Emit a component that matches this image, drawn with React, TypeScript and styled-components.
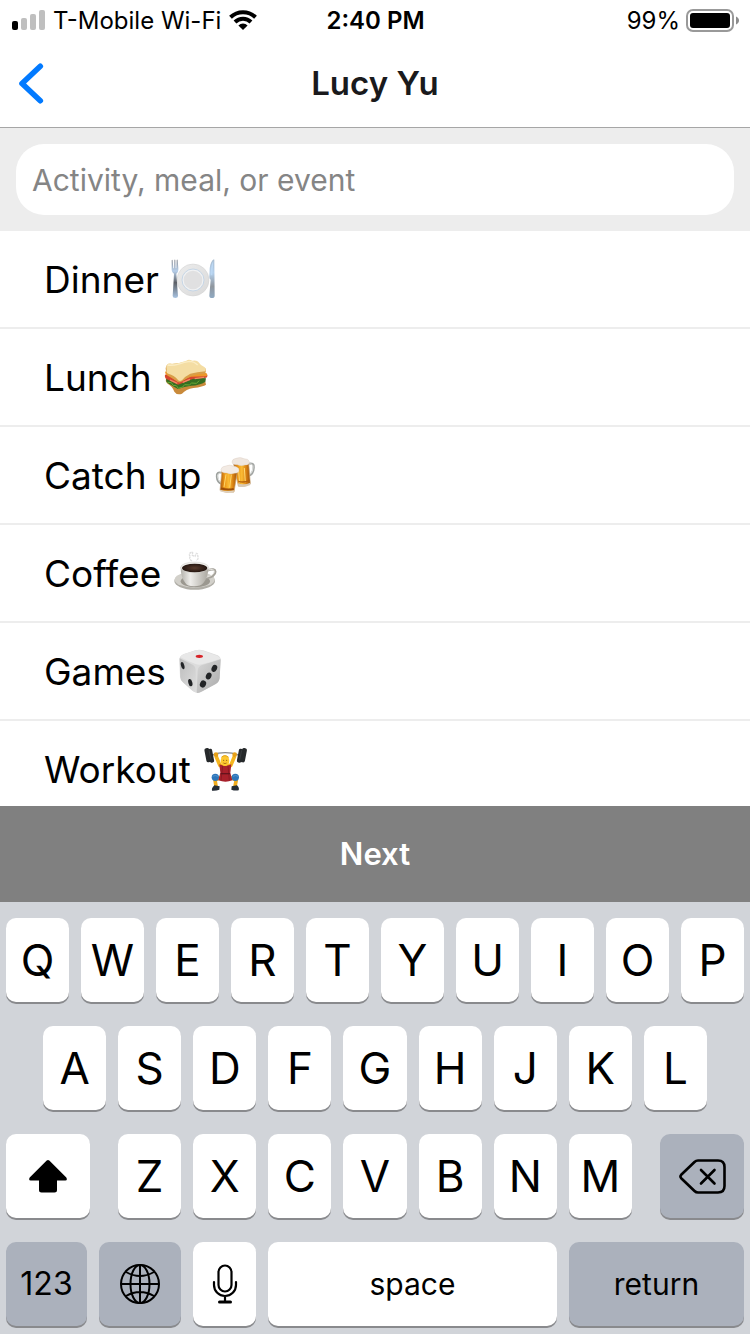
import React from "react";
import styled, { createGlobalStyle } from "styled-components";

const GlobalStyle = createGlobalStyle`
  *, *::before, *::after { box-sizing: border-box; }
  body { margin: 0; background: #fff; }
  body, button, input { font-family: Inter, "Liberation Sans", sans-serif; color: #000; }
  button { border: 0; padding: 0; margin: 0; background: none; cursor: pointer; }
  svg { display: block; flex: none; }
`;

const Screen = styled.div`
  display: flex;
  flex-direction: column;
  height: 100vh;
  overflow: hidden;
  background: #fff;
`;

const StatusBar = styled.div`
  display: grid;
  grid-template-columns: 1fr auto 1fr;
  align-items: center;
  flex: none;
  height: 40px;
  padding: 0 11px 0 12px;
  font-size: 24px;
  line-height: 32px;
`;

const StatusGroup = styled.div<{ $end?: boolean }>`
  display: flex;
  align-items: center;
  justify-content: ${(p) => (p.$end ? "flex-end" : "flex-start")};
  gap: ${(p) => (p.$end ? 6 : 8)}px;
  white-space: nowrap;
`;

const StatusText = styled.span<{ $strong?: boolean }>`
  padding-top: 2px;
  font-weight: ${(p) => (p.$strong ? 600 : 400)};
`;

const NavBar = styled.header`
  display: grid;
  grid-template-columns: 64px 1fr 64px;
  align-items: center;
  flex: none;
  height: 88px;
  border-bottom: 1px solid #a6a6a6;
`;

const BackButton = styled.button`
  display: flex;
  align-items: center;
  height: 100%;
  padding-left: 18px;
`;

const Title = styled.h1`
  margin: 0;
  padding-bottom: 2px;
  text-align: center;
  font-size: 33px;
  line-height: 40px;
  font-weight: 600;
  color: #1a1a1c;
`;

const SearchArea = styled.div`
  flex: none;
  padding: 16px;
  background: #ededed;
`;

const SearchInput = styled.input`
  display: block;
  width: 100%;
  height: 71px;
  padding: 0 16px;
  border: 0;
  outline: 0;
  border-radius: 28px;
  background: #fff;
  font-size: 30px;
  &::placeholder { color: #858585; opacity: 1; }
`;

const List = styled.ul`
  flex: 1;
  min-height: 0;
  margin: 0;
  padding: 0;
  overflow: hidden;
  list-style: none;
`;

const Suggestion = styled.button`
  display: flex;
  align-items: center;
  gap: 12px;
  width: 100%;
  height: 98px;
  padding-left: 44px;
  border-bottom: 2px solid #ededed;
  font-size: 37px;
  line-height: 48px;
`;

const SuggestionLabel = styled.span`
  padding-top: 2px;
`;

const NextButton = styled.button`
  flex: none;
  height: 96px;
  background: #808080;
  color: #fff;
  font-size: 31px;
  line-height: 40px;
  font-weight: 600;
`;

const Keyboard = styled.div`
  display: flex;
  flex-direction: column;
  flex: none;
  gap: 24px;
  padding: 16px 6px 8px;
  background: #d1d4d9;
`;

const KeyRow = styled.div<{ $inset?: number }>`
  display: flex;
  flex: 1;
  gap: 12px;
  padding: 0 ${(p) => p.$inset ?? 0}px;
`;

const Key = styled.button<{ $grow?: number; $dark?: boolean; $size?: number }>`
  display: flex;
  align-items: center;
  justify-content: center;
  flex: ${(p) => p.$grow ?? 63} 1 0;
  min-width: 0;
  height: 84px;
  border-radius: 10px;
  background: ${(p) => (p.$dark ? "#abb1bc" : "#fff")};
  box-shadow: 0 2px 0 #898a8d;
  font-size: ${(p) => p.$size ?? 44}px;
  line-height: 48px;
`;

const EmojiSvg = ({ box, children }: { box: string; children: React.ReactNode }) => (
  <svg width="45" height="45" viewBox={box} aria-hidden="true">{children}</svg>
);

const Dinner = () => (
  <EmojiSvg box="60 51 135 135">
    <defs>
      <linearGradient id="steel" x1="0" y1="0" x2="0" y2="1">
        <stop offset="0" stopColor="#8d9097" /><stop offset=".3" stopColor="#b7cfea" />
        <stop offset=".6" stopColor="#5d6066" /><stop offset="1" stopColor="#a9c4e2" />
      </linearGradient>
      <linearGradient id="blade" x1="0" y1="0" x2="0" y2="1">
        <stop offset="0" stopColor="#a9bccf" /><stop offset=".35" stopColor="#b4d0ec" />
        <stop offset=".7" stopColor="#8f969e" /><stop offset="1" stopColor="#8fa9c2" />
      </linearGradient>
      <linearGradient id="plate" x1="0" y1="0" x2="1" y2="1">
        <stop offset="0" stopColor="#ececec" /><stop offset="1" stopColor="#dadada" />
      </linearGradient>
    </defs>
    <circle cx="126" cy="120" r="48" fill="url(#plate)" stroke="#cfcfcf" strokeWidth="1.5" />
    <circle cx="126" cy="120" r="33" fill="#f1f2f3" stroke="#c6d6e6" strokeWidth="3" />
    <circle cx="126" cy="120" r="28" fill="#e0e0e1" />
    <path d="M62 61q2-3 3 0l2 24h2l1-25q2-3 3 0l1 25h2l1-25q2-3 3 0l2 24q1 13-6 17l5 67q0 6-8 6t-8-6l4-67q-8-4-7-17z" fill="url(#steel)" />
    <path d="M189 58q-10 4-13 27l-1 26q0 6 4 8l-4 48q0 7 8 7t8-7l-1-106q0-3-1-3z" fill="url(#blade)" />
    <path d="M187 63q-7 8-8 43h5z" fill="#bcd8f4" />
  </EmojiSvg>
);

const Sandwich = () => (
  <EmojiSvg box="42 345 135 135">
    <path d="M48 416q-3 9 3 14 16 9 22 25 8 12 23 6 12-13 34-17 30-4 38-10l-4-18z" fill="#c98a3a" />
    <path d="M48 418q0 9 6 12 20 12 30 17 18-7 40-10 25-1 42-12l2-10-60-5z" fill="#356f22" />
    <path d="M52 427l12 1 5 8 10 1 6 8 13-4 6-7 14 1 7-6 14 1 9-8" fill="none" stroke="#6aa834" strokeWidth="3" />
    <path d="M45 404q-2 10 6 14l33 16 22-8 22-9 41-4q5-5 3-9l-80-12z" fill="#d4472e" />
    <path d="M60 420l22 10m16-3 22-9m14-2 28-4" stroke="#f08b66" strokeWidth="4" fill="none" />
    <path d="M45 395q0 8 8 12l32 18 38-15 46-1q5-3 1-9l-80-20z" fill="#ee982a" />
    <path d="M51 374q-6 8-3 20 4 12 13 16l17 12q7 8 15 4 13-7 28-17 20-7 43-8 6-4 2-16l-60-18z" fill="#d89e48" />
    <path d="M51 374q6-6 15-3 23-1 43-9 7-5 18 0 14-3 19 5 5 9 17 14 6 4 3 13-25 2-45 7-15 7-25 20-9 5-14-3-9-12-27-17-7-3-5-12-3-8 1-15z" fill="#f4dda3" />
    <path d="M53 375q15 2 30-2 22-7 35-9 14 0 25 11" stroke="#fbedc5" strokeWidth="4" fill="none" />
  </EmojiSvg>
);

const Beers = () => (
  <EmojiSvg box="192 39 135 135">
    <defs>
      <linearGradient id="beer" x1="0" x2="1" y1="0" y2="0">
        <stop offset="0" stopColor="#a9560b" /><stop offset=".25" stopColor="#ea9516" />
        <stop offset=".5" stopColor="#fbbc35" /><stop offset=".75" stopColor="#da8212" /><stop offset="1" stopColor="#9a4f0a" />
      </linearGradient>
    </defs>
    <path d="M294 72q19-5 17 10-1 20-15 25" fill="none" stroke="#a2a5a3" strokeWidth="7" />
    <path d="M294 73q16-4 15 9-1 18-13 23" fill="none" stroke="#e4e6e3" strokeWidth="3" />
    <path d="M250 68l46 1 5 62q-15 11-36 7z" fill="url(#beer)" stroke="#c9a474" strokeWidth="2" />
    <path d="M265 85l4 43m14-44 3 43" stroke="#ffd873" strokeWidth="3" />
    <path d="M265 124q17 5 34-3" stroke="#b4600d" strokeWidth="4" fill="none" />
    <path d="M264 130q18 6 37-2v7q-18 9-36 5z" fill="#d8c9b4" />
    <path d="M246 66q0-9 12-11 13-5 24 1 14 0 16 9 1 10-13 10-12 5-23-1-15 2-16-8z" fill="#efe6de" stroke="#d4c5ba" strokeWidth="1" />
    <path d="M216 99q-17-5-15 11 1 17 14 21" fill="none" stroke="#9da19e" strokeWidth="7" />
    <path d="M216 100q-14-3-13 10 1 14 11 19" fill="none" stroke="#e4e6e3" strokeWidth="3" />
    <path d="M216 90l46 4-10 62q-22 5-42-5z" fill="url(#beer)" stroke="#c9a474" strokeWidth="2" />
    <path d="M228 103l-6 38m22-37-5 39" stroke="#ffd568" strokeWidth="3" />
    <path d="M213 145q19 6 38 2" stroke="#9c4d09" strokeWidth="6" fill="none" />
    <path d="M210 149q20 7 42 2l-1 7q-22 3-41-4z" fill="#dfd1be" />
    <path d="M213 88q2-9 14-10 13-6 24 1 15 1 16 12 0 9-14 9-11 5-22-1-19 1-18-11z" fill="#f3ebe4" stroke="#d4c5ba" strokeWidth="1" />
  </EmojiSvg>
);

const Coffee = () => (
  <EmojiSvg box="69 333 135 135">
    <defs>
      <linearGradient id="cup" x1="0" x2="1">
        <stop offset="0" stopColor="#b3b1ab" /><stop offset=".35" stopColor="#eeedea" /><stop offset="1" stopColor="#aaa79f" />
      </linearGradient>
      <radialGradient id="brew">
        <stop offset="0" stopColor="#573a2c" /><stop offset="1" stopColor="#241610" />
      </radialGradient>
    </defs>
    <ellipse cx="134" cy="423" rx="61" ry="26" fill="#b0aea7" />
    <ellipse cx="134" cy="419" rx="60" ry="24" fill="#d2d0ca" />
    <ellipse cx="136" cy="424" rx="44" ry="18" fill="#9b9890" />
    <path d="M173 391q22-7 23 4 0 14-29 20" fill="none" stroke="#a5a29a" strokeWidth="7" />
    <path d="M174 390q19-5 19 5-1 12-25 17" fill="none" stroke="#e4e2dd" strokeWidth="3" />
    <path d="M92 382q0 30 14 47 6 10 26 10t28-10q15-16 15-47z" fill="url(#cup)" />
    <ellipse cx="134" cy="382" rx="42" ry="16" fill="#efeeeb" stroke="#bfbcb5" strokeWidth="1" />
    <ellipse cx="134" cy="384" rx="38" ry="13" fill="url(#brew)" />
    <path d="M126 363q-12-8-4-13-8-7 0-12 4-4 6 0l-1 8 8 3 4-9q6 1 4 8 5 9-5 13" fill="none" stroke="#dedede" strokeWidth="4" strokeDasharray="7 2" />
  </EmojiSvg>
);

const Die = () => (
  <EmojiSvg box="87 42 135 135">
    <defs>
      <linearGradient id="leftFace" x1="0" y1="0" x2="1" y2="1">
        <stop offset="0" stopColor="#bdbdbd" /><stop offset="1" stopColor="#dedede" />
      </linearGradient>
      <linearGradient id="rightFace" x1="0" y1="0" x2="1" y2="1">
        <stop offset="0" stopColor="#d8d8d8" /><stop offset="1" stopColor="#aaaaaa" />
      </linearGradient>
    </defs>
    <path d="M91 73q1-9 12-15l36-12q12-3 23 0l44 15q10 5 9 16l-4 55q-2 10-12 16l-42 22q-12 6-22 0l-32-27q-9-7-10-17z" fill="#dcdcdc" />
    <path d="M92 70l39 19q9 5 9 17l2 66q-5 0-12-5l-28-25q-8-7-8-16z" fill="url(#leftFace)" />
    <path d="M215 73l-3 57q-2 12-12 17l-40 22q-12 7-17 4l3-66q1-11 11-16z" fill="url(#rightFace)" />
    <path d="M93 66q4-5 12-9l37-11q10-2 20 1l42 15q8 3 10 9-25 9-55 17-10 3-19-1-25-9-47-21z" fill="#e8e8e8" />
    <ellipse cx="151" cy="64" rx="11" ry="5" fill="#d72328" />
    <g fill="#222426">
      <ellipse cx="101" cy="92" rx="5" ry="11" transform="rotate(-15 101 92)" />
      <ellipse cx="124" cy="143" rx="6" ry="11" transform="rotate(-15 124 143)" />
      <ellipse cx="196" cy="100" rx="8" ry="11" transform="rotate(25 196 100)" />
      <ellipse cx="179" cy="123" rx="8" ry="11" transform="rotate(25 179 123)" />
      <ellipse cx="162" cy="147" rx="9" ry="11" transform="rotate(25 162 147)" />
    </g>
  </EmojiSvg>
);

const Lifter = () => (
  <EmojiSvg box="156 336 135 135">
    <path d="M184 360q38-14 79 0" fill="none" stroke="#85888b" strokeWidth="4" />
    <g fill="#26292b">
      <rect x="163" y="339" width="15" height="43" rx="6" transform="rotate(-11 170 360)" />
      <rect x="173" y="341" width="13" height="42" rx="5" transform="rotate(-11 180 360)" />
      <rect x="270" y="339" width="15" height="43" rx="6" transform="rotate(11 277 360)" />
      <rect x="261" y="341" width="13" height="42" rx="5" transform="rotate(11 266 360)" />
    </g>
    <path d="M174 346l6 28m92-28-6 28" stroke="#4d5154" strokeWidth="1.5" />
    <path d="M195 363l12 29 32 0 12-29" fill="none" stroke="#f5b51f" strokeWidth="11" strokeLinejoin="round" />
    <circle cx="195" cy="359" r="7" fill="#e6a018" />
    <circle cx="251" cy="359" r="7" fill="#e6a018" />
    <path d="M209 428l-17 6 3 20m43-26 18 6-4 20" fill="none" stroke="#f0ac1e" strokeWidth="11" strokeLinejoin="round" />
    <path d="M205 388q18 8 36 0l-3 25 6 23q-20 8-42 0l6-23z" fill="#a8202b" />
    <path d="M215 393l-5 43m21-43 4 43" stroke="#7c1620" strokeWidth="2" />
    <path d="M209 416h28" stroke="#65131c" strokeWidth="4" />
    <ellipse cx="222" cy="377" rx="13" ry="16" fill="#fdc72f" />
    <path d="M211 367q10-10 22 0" stroke="#e2a414" strokeWidth="3" fill="none" />
    <circle cx="218" cy="376" r="1.5" fill="#613d10" /><circle cx="227" cy="376" r="1.5" fill="#613d10" />
    <path d="M217 384q5 4 10 0" stroke="#8b4b10" strokeWidth="2" fill="none" />
    <circle cx="193" cy="427" r="11" fill="#2d75b9" />
    <circle cx="253" cy="427" r="11" fill="#2d75b9" />
    <path d="M185 424q7-5 16 0m45 0q7-5 15 0" stroke="#4f93cd" strokeWidth="3" fill="none" />
    <path d="M190 451l16 3-1 10q-10 4-22 3-2-7 7-16zM242 454l16-3q8 8 5 15-11 2-22-2z" fill="#252d36" />
  </EmojiSvg>
);

const SignalIcon = () => (
  <svg width="33" height="20" viewBox="0 0 33 20" role="img" aria-label="Signal, one of four bars">
    <rect x="0" y="11" width="6" height="9" rx="2" fill="#000" />
    <rect x="9" y="8" width="6" height="12" rx="2" fill="#bfbfbf" />
    <rect x="18" y="4" width="6" height="16" rx="2" fill="#bfbfbf" />
    <rect x="27" y="0" width="6" height="20" rx="2" fill="#bfbfbf" />
  </svg>
);

const WifiIcon = () => (
  <svg width="28" height="20" viewBox="0 0 28 20" role="img" aria-label="Wi-Fi">
    <g fill="none" stroke="#000" strokeWidth="4">
      <path d="M1.500 7.200a18 18 0 0 1 25 0" />
      <path d="M6 12a11.500 11.500 0 0 1 16 0" />
    </g>
    <path d="M9.400 15.500a6.500 6.500 0 0 1 9.200 0L14 20z" fill="#000" />
  </svg>
);

const BatteryIcon = () => (
  <svg width="53" height="23" viewBox="0 0 53 23" role="img" aria-label="Battery">
    <rect x="1" y="1" width="46" height="21" rx="6" fill="none" stroke="#999" strokeWidth="2" />
    <rect x="4" y="4" width="40" height="15" rx="3" fill="#000" />
    <path d="M50 7.500c4 1.500 4 6.500 0 8z" fill="#8c8c8c" />
  </svg>
);

const BackIcon = () => (
  <svg width="26" height="42" viewBox="0 0 26 42" aria-hidden="true">
    <path d="M22.300 3.300L4 20.500l18.300 17.200" fill="none" stroke="#027aff" strokeWidth="5.600" strokeLinecap="round" strokeLinejoin="round" />
  </svg>
);

const ShiftIcon = () => (
  <svg width="38" height="33" viewBox="0 0 38 33" aria-hidden="true">
    <path d="M17.700 .600q1.300-1.200 2.600 0L37.300 17.500q1.500 3-1 3H28v9.500q0 2.500-2.500 2.500h-13q-2.500 0-2.500-2.500v-9.500H1.700q-2.500 0-1-3z" fill="#000" />
  </svg>
);

const DeleteIcon = () => (
  <svg width="47" height="35" viewBox="0 0 47 35" fill="none" stroke="#000" strokeWidth="2.600" strokeLinecap="round" strokeLinejoin="round" aria-hidden="true">
    <path d="M19 1.500h20q6.500 0 6.500 6.500v19q0 6.500-6.500 6.500H19q-2 0-3.500-1.500L2.200 19.200q-1.500-1.700 0-3.400L15.500 3q1.500-1.500 3.500-1.500z" />
    <path d="M22 11l13.500 13.500m0-13.500l-13.500 13.500" />
  </svg>
);

const GlobeIcon = () => (
  <svg width="42" height="42" viewBox="0 0 42 42" fill="none" stroke="#000" strokeWidth="2" aria-hidden="true">
    <circle cx="21" cy="21" r="19" />
    <ellipse cx="21" cy="21" rx="9.500" ry="19" />
    <path d="M21 2v38M2 21h38M7 9q14 8 28 0M7 33q14-8 28 0" />
  </svg>
);

const MicIcon = () => (
  <svg width="26" height="40" viewBox="0 0 26 40" fill="none" stroke="#000" strokeWidth="2.200" strokeLinecap="round" aria-hidden="true">
    <rect x="6.500" y="1.500" width="13" height="26" rx="6.500" />
    <path d="M2 18v3a11 11 0 0 0 22 0v-3M13 32v6" />
    <path d="M7.500 38h11" strokeWidth="3" />
  </svg>
);

const suggestions = [
  { label: "Dinner", Icon: Dinner },
  { label: "Lunch", Icon: Sandwich },
  { label: "Catch up", Icon: Beers },
  { label: "Coffee", Icon: Coffee },
  { label: "Games", Icon: Die },
  { label: "Workout", Icon: Lifter },
];

const LetterGroup = styled.div`
  display: flex;
  flex: 514 1 0;
  gap: 12px;
  margin: 0 16px;
`;

const letterKeys = (letters: string) =>
  letters.split("").map((letter) => <Key key={letter} type="button">{letter}</Key>);

export default function App() {
  return (
    <>
      <GlobalStyle />
      <Screen>
        <StatusBar>
          <StatusGroup>
            <SignalIcon />
            <StatusText>T-Mobile Wi-Fi</StatusText>
            <WifiIcon />
          </StatusGroup>
          <StatusGroup>
            <StatusText as="time" $strong>2:40 PM</StatusText>
          </StatusGroup>
          <StatusGroup $end>
            <StatusText>99%</StatusText>
            <BatteryIcon />
          </StatusGroup>
        </StatusBar>
        <NavBar>
          <BackButton type="button" aria-label="Back"><BackIcon /></BackButton>
          <Title>Lucy Yu</Title>
        </NavBar>
        <SearchArea>
          <SearchInput type="text" aria-label="Activity, meal, or event" placeholder="Activity, meal, or event" />
        </SearchArea>
        <List>
          {suggestions.map(({ label, Icon }) => (
            <li key={label}>
              <Suggestion type="button">
                <SuggestionLabel>{label}</SuggestionLabel>
                <Icon />
              </Suggestion>
            </li>
          ))}
        </List>
        <NextButton type="button">Next</NextButton>
        <Keyboard>
          <KeyRow>{letterKeys("QWERTYUIOP")}</KeyRow>
          <KeyRow $inset={37}>{letterKeys("ASDFGHJKL")}</KeyRow>
          <KeyRow>
            <Key type="button" $grow={84} aria-label="Shift"><ShiftIcon /></Key>
            <LetterGroup>{letterKeys("ZXCVBNM")}</LetterGroup>
            <Key type="button" $grow={84} $dark aria-label="Delete"><DeleteIcon /></Key>
          </KeyRow>
          <KeyRow>
            <Key type="button" $grow={81} $dark $size={32}>123</Key>
            <Key type="button" $grow={82} $dark aria-label="Next keyboard"><GlobeIcon /></Key>
            <Key type="button" aria-label="Dictate"><MicIcon /></Key>
            <Key type="button" $grow={289} $size={30}>space</Key>
            <Key type="button" $grow={175} $dark $size={30}>return</Key>
          </KeyRow>
        </Keyboard>
      </Screen>
    </>
  );
}
